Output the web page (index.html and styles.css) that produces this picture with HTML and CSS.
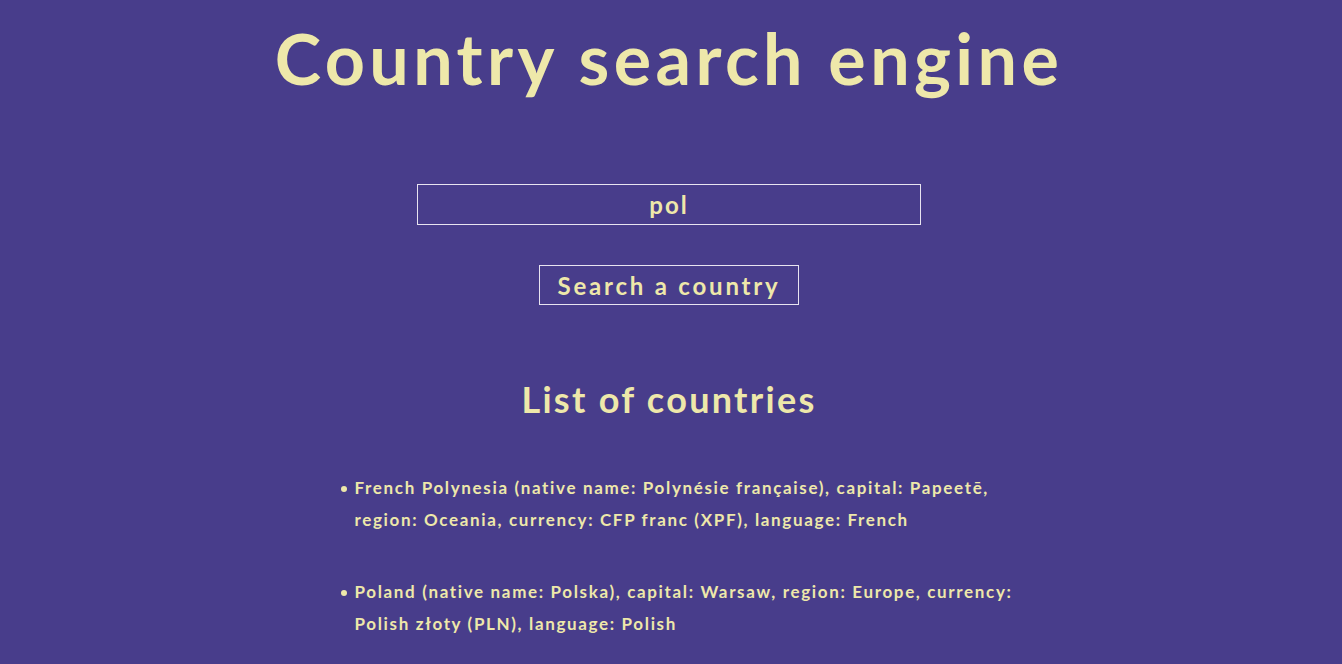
FILE: index.html
```html
<!DOCTYPE html>
<html lang="en">
<head>
<meta charset="utf-8">
<title>Country search engine</title>
<link rel="stylesheet" href="styles.css">
</head>
<body>
<main class="page">
  <h1 class="title">Country search engine</h1>
  <form class="search">
    <input class="search-input" type="text" value="pol">
    <button class="search-button" type="button">Search a country</button>
  </form>
  <h2 class="list-title">List of countries</h2>
  <ul class="countries">
    <li class="country">French Polynesia (native name: Polynésie française), capital: Papeetē, region: Oceania, currency: CFP franc (XPF), language: French</li>
    <li class="country">Poland (native name: Polska), capital: Warsaw, region: Europe, currency: Polish złoty (PLN), language: Polish</li>
  </ul>
</main>
</body>
</html>
```

FILE: styles.css
```css
html, body {
  margin: 0;
  padding: 0;
  background: #483d8b;
}

body {
  color: #eee8aa;
  font-family: "Lato", "Open Sans", sans-serif;
  font-weight: 700;
}

.page {
  display: flex;
  flex-direction: column;
  align-items: center;
  padding: 16px 4px 0 0;
}

.title {
  margin: 0;
  font-size: 70px;
  line-height: 84px;
  font-weight: 700;
  letter-spacing: 4.4px;
}

.search {
  display: flex;
  flex-direction: column;
  align-items: center;
  margin-top: 84px;
  gap: 40px;
}

.search-input {
  box-sizing: border-box;
  width: 504px;
  height: 41px;
  background: transparent;
  border: 1px solid #e8e4f0;
  color: #eee8aa;
  font-family: inherit;
  font-weight: 700;
  font-size: 24px;
  letter-spacing: 2px;
  text-align: center;
  outline: none;
  padding: 0;
}

.search-button {
  box-sizing: border-box;
  width: 260px;
  height: 40px;
  background: transparent;
  border: 1px solid #e8e4f0;
  color: #eee8aa;
  font-family: inherit;
  font-weight: 700;
  font-size: 24px;
  letter-spacing: 2.8px;
  padding: 0;
}

.list-title {
  margin: 72px 0 0;
  font-size: 36px;
  line-height: 44px;
  font-weight: 700;
  letter-spacing: 2.3px;
}

.countries {
  box-sizing: border-box;
  width: 711px;
  margin: 51px 0 0;
  padding-left: 41px;
  list-style: none;
}

.country {
  position: relative;
  font-size: 17px;
  line-height: 32px;
  letter-spacing: 1.65px;
  margin-bottom: 40px;
}

.country::before {
  content: "";
  position: absolute;
  left: -14px;
  top: 14px;
  width: 6px;
  height: 6px;
  border-radius: 50%;
  background: #eee8aa;
}
```
